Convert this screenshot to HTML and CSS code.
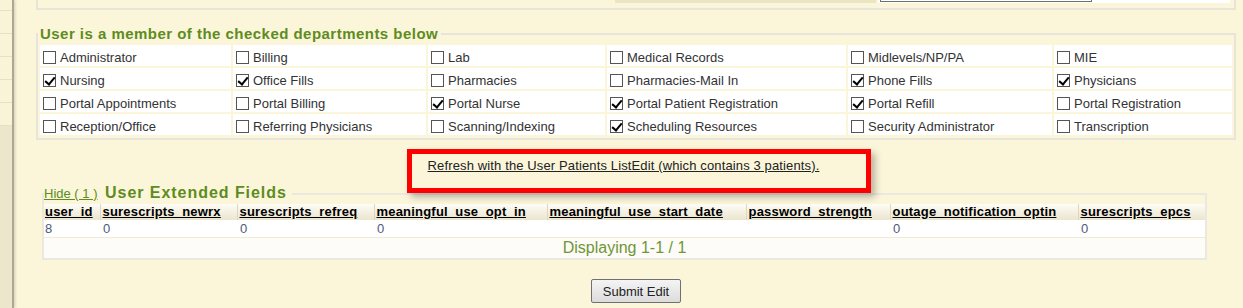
FILE: index.html
```html
<!DOCTYPE html>
<html lang="en">
<head>
  <meta charset="UTF-8" />
  <title>Edit User</title>
  <link rel="stylesheet" href="styles.css">
</head>
<body>
  <div class="page">
    <aside class="sidebar">
      <div class="side-item first"></div>
      <div class="side-item"></div>
      <div class="side-item"></div>
      <div class="side-item"></div>
      <div class="side-item"></div>
      <div class="side-item"></div>
    </aside>

    <main class="main">
      <div class="top-box">
        <div class="top-row">
          <div class="top-label"></div>
          <div class="top-value"><span class="top-input"></span></div>
        </div>
      </div>

      <fieldset class="depts">
        <legend>User is a member of the checked departments below</legend>
        <table class="dept-table">
          <colgroup>
            <col style="width:191px"><col style="width:193px"><col style="width:177px">
            <col style="width:239px"><col style="width:204px"><col style="width:178px">
          </colgroup>
          <tr>
            <td><label class="opt"><input type="checkbox">Administrator</label></td>
            <td><label class="opt"><input type="checkbox">Billing</label></td>
            <td><label class="opt"><input type="checkbox">Lab</label></td>
            <td><label class="opt"><input type="checkbox">Medical Records</label></td>
            <td><label class="opt"><input type="checkbox">Midlevels/NP/PA</label></td>
            <td><label class="opt"><input type="checkbox">MIE</label></td>
          </tr>
          <tr>
            <td><label class="opt"><input type="checkbox" checked>Nursing</label></td>
            <td><label class="opt"><input type="checkbox" checked>Office Fills</label></td>
            <td><label class="opt"><input type="checkbox">Pharmacies</label></td>
            <td><label class="opt"><input type="checkbox">Pharmacies-Mail In</label></td>
            <td><label class="opt"><input type="checkbox" checked>Phone Fills</label></td>
            <td><label class="opt"><input type="checkbox" checked>Physicians</label></td>
          </tr>
          <tr>
            <td><label class="opt"><input type="checkbox">Portal Appointments</label></td>
            <td><label class="opt"><input type="checkbox">Portal Billing</label></td>
            <td><label class="opt"><input type="checkbox" checked>Portal Nurse</label></td>
            <td><label class="opt"><input type="checkbox" checked>Portal Patient Registration</label></td>
            <td><label class="opt"><input type="checkbox" checked>Portal Refill</label></td>
            <td><label class="opt"><input type="checkbox">Portal Registration</label></td>
          </tr>
          <tr>
            <td><label class="opt"><input type="checkbox">Reception/Office</label></td>
            <td><label class="opt"><input type="checkbox">Referring Physicians</label></td>
            <td><label class="opt"><input type="checkbox">Scanning/Indexing</label></td>
            <td><label class="opt"><input type="checkbox" checked>Scheduling Resources</label></td>
            <td><label class="opt"><input type="checkbox">Security Administrator</label></td>
            <td><label class="opt"><input type="checkbox">Transcription</label></td>
          </tr>
        </table>
      </fieldset>

      <div class="refresh">
        <span class="refresh-box"><a href="#">Refresh with the User Patients ListEdit (which contains 3 patients).</a></span>
      </div>

      <fieldset class="ext">
        <legend><a href="#" class="hide-link">Hide ( 1 )</a> <span class="ext-title">User Extended Fields</span></legend>
        <table class="ext-table">
          <colgroup>
            <col style="width:56px"><col style="width:137px"><col style="width:137px"><col style="width:173px">
            <col style="width:199px"><col style="width:144px"><col style="width:188px"><col style="width:127px">
          </colgroup>
          <tr>
            <th><a href="#">user_id</a></th>
            <th><a href="#">surescripts_newrx</a></th>
            <th><a href="#">surescripts_refreq</a></th>
            <th><a href="#">meaningful_use_opt_in</a></th>
            <th><a href="#">meaningful_use_start_date</a></th>
            <th><a href="#">password_strength</a></th>
            <th><a href="#">outage_notification_optin</a></th>
            <th><a href="#">surescripts_epcs</a></th>
          </tr>
          <tr class="row">
            <td>8</td><td>0</td><td>0</td><td>0</td><td></td><td></td><td>0</td><td>0</td>
          </tr>
          <tr class="foot">
            <td colspan="8">Displaying 1-1 / 1</td>
          </tr>
        </table>
      </fieldset>

      <div class="actions">
        <button type="submit">Submit Edit</button>
      </div>
    </main>
  </div>
</body>
</html>
```

FILE: styles.css
```css
* { box-sizing: border-box; }

body {
  margin: 0;
  background: #fbf6da;
  font-family: "Liberation Sans", Arial, sans-serif;
  font-size: 13px;
  color: #333;
}

.page {
  display: flex;
  min-height: 308px;
}

/* left menu strip */
.sidebar {
  width: 14px;
  flex: none;
  background: #ebe6cc;
  border-right: 2px solid #aca894;
  box-shadow: 1px 0 3px rgba(0, 0, 0, 0.18);
}

.side-item {
  height: 23px;
  background: #f9f4d8;
  border-bottom: 1px solid #e6e0c4;
}

.side-item.first {
  height: 11px;
}

.main {
  flex: 1;
  padding: 0 7px 0 22px;
}

/* bottom of the previous block */
.top-box {
  height: 10px;
  border: 2px solid #e7e4d9;
  border-top: none;
}

.top-row {
  display: flex;
  gap: 2px;
  margin-left: 577px;
  height: 3px;
}

.top-label {
  width: 261px;
  background: #ebe5c4;
}

.top-value {
  width: 352px;
  background: #fff;
  padding-left: 2px;
}

.top-input {
  display: block;
  width: 212px;
  height: 2px;
  border: 1px solid #6f6f6f;
  border-top: none;
}

/* departments */
.depts {
  margin: 15px 0 0;
  padding: 0 0 1px;
  border: 2px solid #e7e4d9;
  min-width: 0;
}

.depts legend {
  padding: 0 3px 0 2px;
  font-size: 15px;
  line-height: 18px;
  letter-spacing: 0.47px;
  font-weight: bold;
  color: #5e8c1e;
}

.dept-table {
  width: 100%;
  table-layout: fixed;
  border-spacing: 2px;
}

.dept-table td {
  height: 21px;
  padding: 3px 4px 0;
  background: #fff;
}

.opt {
  display: flex;
  align-items: center;
  gap: 4px;
  white-space: nowrap;
}

.opt input {
  appearance: none;
  -webkit-appearance: none;
  position: relative;
  flex: none;
  width: 13px;
  height: 13px;
  margin: 0 0 0 -1px;
  border: 1px solid #555;
  background: #fff;
}

.opt input:checked::after {
  content: "";
  position: absolute;
  left: 3px;
  top: 0;
  width: 4px;
  height: 8px;
  border: solid #000;
  border-width: 0 2px 2px 0;
  transform: rotate(40deg);
}

/* refresh link (framed) */
.refresh {
  position: relative;
  z-index: 1;
  display: flex;
  justify-content: center;
  margin: 9px 0 -10px;
}

.refresh-box {
  margin-left: 6px;
  padding: 4px 47px 15px 16px;
  border: 5px solid #f00;
  box-shadow: 4px 4px 7px rgba(0, 0, 0, 0.28);
  line-height: 15px;
  letter-spacing: 0.13px;
}

.refresh-box a {
  color: #222;
}

/* extended fields */
.ext {
  margin: 0 29px 0 6px;
  padding: 0;
  border: 2px solid #ebe8dd;
  min-width: 0;
}

.ext legend {
  padding: 0 5px 0 0;
  line-height: 20px;
  font-size: 13px;
}

.hide-link {
  color: #5e8c1e;
}

.ext-title {
  margin-left: 4px;
  font-size: 16px;
  letter-spacing: 0.95px;
  font-weight: bold;
  color: #5e8c1e;
}

.ext-table {
  width: 100%;
  table-layout: fixed;
  border-collapse: collapse;
}

.ext-table th {
  height: 16px;
  padding: 0 2px;
  line-height: 16px;
  text-align: left;
  white-space: nowrap;
  letter-spacing: 0.2px;
  background: linear-gradient(#fdfcf6, #ebe5ce);
  border-left: 1px solid #ddd7c1;
}

.ext-table th:first-child {
  border-left: none;
  padding-left: 1px;
}

.ext-table th a {
  color: #000;
}

.row td {
  height: 17px;
  padding: 0 2px 0 3px;
  background: #fff;
  color: #4d5a7a;
}

.row td:first-child {
  padding-left: 1px;
}

.foot td {
  height: 21px;
  border-top: 1px solid #f1ebd1;
  background: #fdfcf9;
  text-align: center;
  font-size: 16px;
  color: #6f9535;
}

.actions {
  margin-top: 19px;
  text-align: center;
}

.actions button {
  height: 24px;
  padding: 3px 11px;
  font: 13px "Liberation Sans", Arial, sans-serif;
  color: #222;
  border: 1px solid #707070;
  border-radius: 2px;
  background: linear-gradient(#f4f4f4, #dcdcdc);
}
```
